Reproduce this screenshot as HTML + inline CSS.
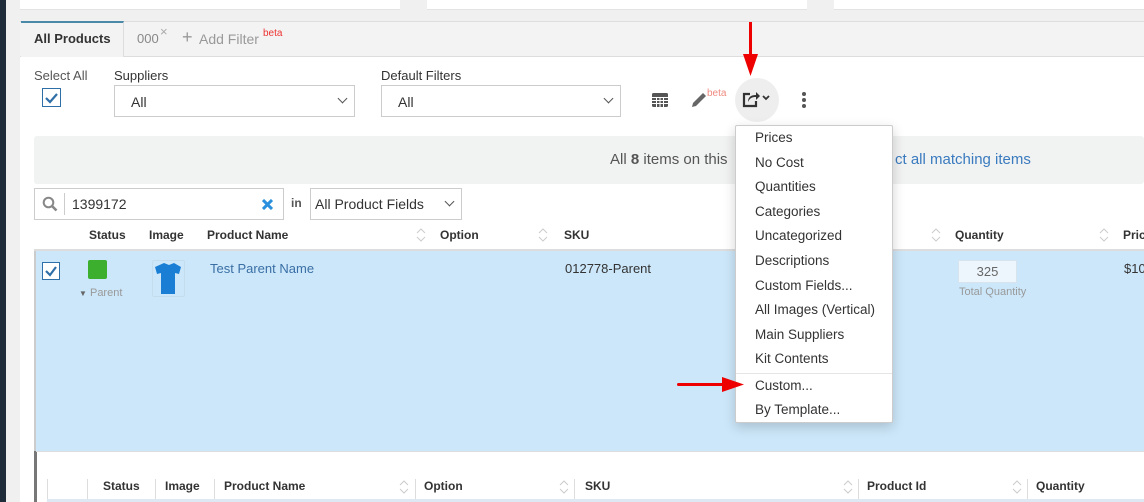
<!DOCTYPE html>
<html><head><meta charset="utf-8"><style>
*{margin:0;padding:0;box-sizing:border-box}
body{width:1144px;height:502px;overflow:hidden;background:#f0f0f0;font-family:"Liberation Sans",Arial,sans-serif;font-size:14px;color:#333;position:relative}
.a{position:absolute}
.sel{border:1px solid #ccc;background:#fff;height:32px;color:#333;padding:8px 16px;font-size:14px}
.chev{position:absolute;right:8px;top:9px;width:7px;height:7px;border-right:1.5px solid #555;border-bottom:1.5px solid #555;transform:rotate(45deg)}
.th{font-weight:bold;font-size:12px;color:#333}
.menu div{height:24.6px;padding-left:19px;line-height:24px;font-size:13.5px;color:#333}
.vl{position:absolute;width:1px;height:20px;background:#ddd;top:479px}
</style></head><body>
<svg width="0" height="0" style="position:absolute"><defs><g id="s"><path d="M1 5l4-4 4 4M1 9l4 4 4-4" stroke="#ccc" stroke-width="1" fill="none"/></g></defs></svg>
<div class="a" style="left:0;top:0;width:6px;height:502px;background:#1f2d3a"></div>
<div class="a" style="left:20px;top:0;width:380px;height:10px;background:#fff;border-bottom:1px solid #e3e3e3"></div>
<div class="a" style="left:427px;top:0;width:380px;height:10px;background:#fff;border-bottom:1px solid #e3e3e3"></div>
<div class="a" style="left:834px;top:0;width:310px;height:10px;background:#fff;border-bottom:1px solid #e3e3e3"></div>
<div class="a" style="left:20px;top:21px;width:1124px;height:481px;background:#fff"></div>
<div class="a" style="left:20px;top:21px;width:1124px;height:36px;background:#f3f3f3;border-top:1px solid #ddd;border-bottom:1px solid #ddd"></div>
<div class="a" style="left:21px;top:21px;width:103px;height:36px;background:#f3f3f3;border-top:2px solid #4a8aa8;border-right:1px solid #ddd"></div>
<div class="a" style="left:34px;top:31px;font-weight:bold;font-size:13px;color:#333">All Products</div>
<div class="a" style="left:137px;top:31px;font-size:13px;color:#888">000</div>
<div class="a" style="left:160px;top:24px;font-size:13px;color:#aaa">×</div>
<div class="a" style="left:182px;top:28px;font-size:18px;color:#999;line-height:18px">+</div>
<div class="a" style="left:199px;top:31px;font-size:14px;color:#999">Add Filter</div>
<div class="a" style="left:263px;top:28px;font-size:10px;color:#e33">beta</div>
<div class="a" style="left:34px;top:68px;font-size:13px;color:#555">Select All</div>
<div class="a" style="left:42px;top:88px;width:19px;height:19px;border:1px solid #2f6fa8;background:#fff"><svg width="17" height="17"><path d="M3 9l4 4 7-8" stroke="#2f6fa8" stroke-width="2.2" fill="none"/></svg></div>
<div class="a" style="left:114px;top:68px;font-size:13px;color:#333">Suppliers</div>
<div class="a sel" style="left:114px;top:85px;width:241px">All<span class="chev"></span></div>
<div class="a" style="left:381px;top:68px;font-size:13px;color:#333">Default Filters</div>
<div class="a sel" style="left:381px;top:85px;width:240px">All<span class="chev"></span></div>
<svg class="a" style="left:652px;top:93px" width="16" height="14"><rect x="0" y="0" width="16" height="14" rx="1.5" fill="#555"/><g stroke="#fff" stroke-width="1"><line x1="0" y1="4.5" x2="16" y2="4.5"/><line x1="0" y1="7.5" x2="16" y2="7.5"/><line x1="0" y1="10.5" x2="16" y2="10.5"/><line x1="4.5" y1="4" x2="4.5" y2="14"/><line x1="8" y1="4" x2="8" y2="14"/><line x1="11.5" y1="4" x2="11.5" y2="14"/></g></svg>
<svg class="a" style="left:690px;top:91px" width="18" height="18"><path d="M2 16l1-4L13 2l3 3L6 15z" fill="#666"/></svg>
<div class="a" style="left:707px;top:88px;font-size:10px;color:#f08a80">beta</div>
<div class="a" style="left:735px;top:78px;width:44px;height:44px;border-radius:50%;background:#eee"></div>
<svg class="a" style="left:741px;top:89px" width="34" height="20"><path d="M9 5H3v12h12v-5" stroke="#333" stroke-width="2.2" fill="none"/><path d="M7 13c0-5 3-7 8-7V3l4 4-4 4V8c-4 0-6 1-8 5z" fill="#333"/><path d="M22 7l3 3 3-3" stroke="#333" stroke-width="1.8" fill="none"/></svg>
<div class="a" style="left:802px;top:92px;width:4px;height:4px;border-radius:50%;background:#555;box-shadow:0 6px 0 #555,0 12px 0 #555"></div>
<div class="a" style="left:749px;top:22px;width:3px;height:38px;background:#e00"></div>
<svg class="a" style="left:743px;top:54px" width="15" height="22"><path d="M0 0h15L7.5 22z" fill="#e00"/></svg>
<div class="a" style="left:34px;top:136px;width:1110px;height:48px;background:#f1f2f2;border-radius:3px"></div>
<div class="a" style="left:610px;top:151px;font-size:15px;color:#555">All <b>8</b> items on this</div>
<div class="a" style="left:895px;top:151px;font-size:15px;color:#3a7bbf">ct all matching items</div>
<div class="a" style="left:34px;top:188px;width:250px;height:32px;border:1px solid #ccc;background:#fff"></div>
<svg class="a" style="left:42px;top:196px" width="16" height="16"><circle cx="6.5" cy="6.5" r="4.8" stroke="#888" stroke-width="2" fill="none"/><path d="M10 10l4.5 4.5" stroke="#888" stroke-width="2.6"/></svg>
<div class="a" style="left:64px;top:193px;width:1px;height:22px;background:#ccc"></div>
<div class="a" style="left:72px;top:196px;font-size:14px;color:#333">1399172</div>
<svg class="a" style="left:262px;top:199px" width="11" height="11"><path d="M1 1l9 9M10 1l-9 9" stroke="#2a8fdd" stroke-width="3"/></svg>
<div class="a" style="left:291px;top:196px;font-size:12px;font-weight:bold;color:#555">in</div>
<div class="a sel" style="left:310px;top:188px;width:152px;padding:7px 4px">All Product Fields<span class="chev"></span></div>
<div class="a th" style="left:89px;top:228px">Status</div>
<div class="a th" style="left:149px;top:228px">Image</div>
<div class="a th" style="left:207px;top:228px">Product Name</div>
<div class="a th" style="left:440px;top:228px">Option</div>
<div class="a th" style="left:564px;top:228px">SKU</div>
<div class="a th" style="left:955px;top:228px">Quantity</div>
<div class="a th" style="left:1123px;top:228px">Pric</div>
<svg class="a" style="left:416px;top:228px" width="10" height="14"><use href="#s"/></svg>
<svg class="a" style="left:538px;top:228px" width="10" height="14"><use href="#s"/></svg>
<svg class="a" style="left:931px;top:228px" width="10" height="14"><use href="#s"/></svg>
<svg class="a" style="left:1099px;top:228px" width="10" height="14"><use href="#s"/></svg>
<div class="a" style="left:34px;top:249px;width:1110px;height:2px;background:#ddd"></div>
<div class="a" style="left:34px;top:251px;width:2px;height:200px;background:#ccc"></div>
<div class="a" style="left:36px;top:251px;width:1108px;height:200px;background:#cce7fa"></div>
<div class="a" style="left:42px;top:262px;width:18px;height:18px;border:1px solid #2f6fa8;background:#fff"><svg width="16" height="16"><path d="M3 8l4 4 6-8" stroke="#2f6fa8" stroke-width="2.2" fill="none"/></svg></div>
<div class="a" style="left:88px;top:260px;width:19px;height:19px;background:#3caf2f;border-radius:2px"></div>
<div class="a" style="left:79px;top:287px;font-size:11px;color:#999"><span style="font-size:8px;color:#666">▼</span> Parent</div>
<div class="a" style="left:152px;top:260px;width:33px;height:37px;border:1px solid #c5dced;border-radius:2px"></div>
<svg class="a" style="left:155px;top:262px" width="28" height="33"><path d="M9 1l5 2 5-2 7 4-2 7-4-1v21H6V11l-4 1L0 5z" fill="#1a7fd4"/></svg>
<div class="a" style="left:210px;top:261px;font-size:13px;color:#3a6fa5">Test Parent Name</div>
<div class="a" style="left:565px;top:261px;font-size:13px;color:#333">012778-Parent</div>
<div class="a" style="left:958px;top:260px;width:59px;height:23px;border:1px solid #d7e4ee;background:#eef6fd;text-align:center;font-size:13px;color:#666;line-height:21px">325</div>
<div class="a" style="left:959px;top:286px;font-size:11px;color:#999">Total Quantity</div>
<div class="a" style="left:1124px;top:261px;font-size:13px;color:#333">$10</div>
<div class="a" style="left:34px;top:451px;width:3px;height:51px;background:#777"></div>
<div class="a" style="left:36px;top:451px;width:1108px;height:1px;background:#ddd"></div>
<div class="a" style="left:47px;top:479px;width:1px;height:23px;background:#ddd"></div>
<div class="a" style="left:47px;top:499px;width:1097px;height:3px;background:#dde8f2"></div>
<div class="vl" style="left:87px"></div>
<div class="vl" style="left:155px"></div>
<div class="vl" style="left:214px"></div>
<div class="vl" style="left:415px"></div>
<div class="vl" style="left:574px"></div>
<div class="vl" style="left:858px"></div>
<div class="vl" style="left:1027px"></div>
<div class="a th" style="left:103px;top:479px">Status</div>
<div class="a th" style="left:165px;top:479px">Image</div>
<div class="a th" style="left:224px;top:479px">Product Name</div>
<div class="a th" style="left:424px;top:479px">Option</div>
<div class="a th" style="left:585px;top:479px">SKU</div>
<div class="a th" style="left:867px;top:479px">Product Id</div>
<div class="a th" style="left:1036px;top:479px">Quantity</div>
<svg class="a" style="left:399px;top:480px" width="10" height="14"><use href="#s"/></svg>
<svg class="a" style="left:559px;top:480px" width="10" height="14"><use href="#s"/></svg>
<svg class="a" style="left:843px;top:480px" width="10" height="14"><use href="#s"/></svg>
<svg class="a" style="left:1012px;top:480px" width="10" height="14"><use href="#s"/></svg>
<div class="a menu" style="left:735px;top:125px;width:158px;height:298px;background:#fff;border:1px solid #ccc;border-radius:2px;box-shadow:0 4px 12px rgba(0,0,0,.18)">
<div>Prices</div><div>No Cost</div><div>Quantities</div><div>Categories</div><div>Uncategorized</div><div>Descriptions</div><div>Custom Fields...</div><div>All Images (Vertical)</div><div>Main Suppliers</div><div>Kit Contents</div>
<div style="border-top:1px solid #e5e5e5;margin-top:1px">Custom...</div><div>By Template...</div>
</div>
<div class="a" style="left:677px;top:383px;width:50px;height:3px;background:#e00;border-radius:2px"></div>
<svg class="a" style="left:722px;top:377px" width="22" height="15"><path d="M0 0l22 7.5L0 15z" fill="#e00"/></svg>
</body></html>
